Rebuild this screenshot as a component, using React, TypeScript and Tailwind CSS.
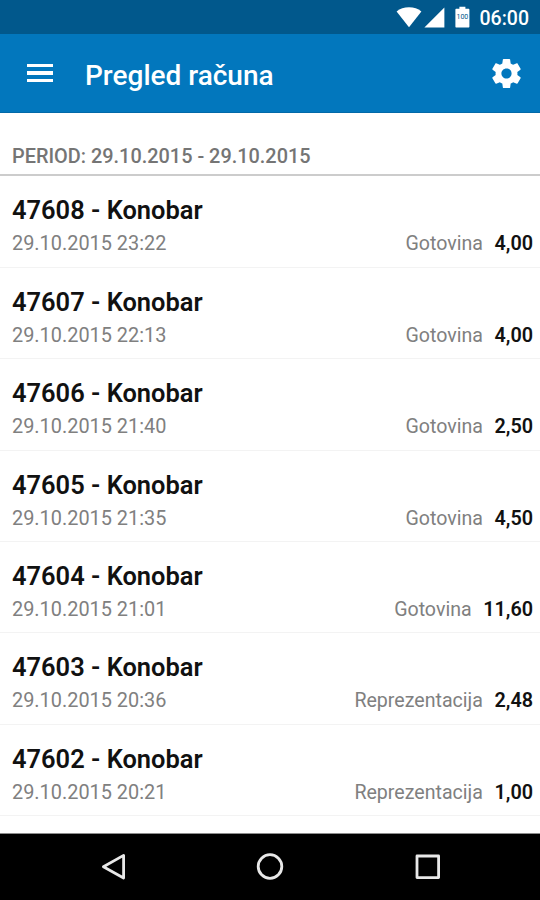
import React from 'react';

interface Receipt {
  id: number;
  waiter: string;
  time: string;
  payment: string;
  amount: string;
}

const receipts: Receipt[] = [
  { id: 47608, waiter: 'Konobar', time: '29.10.2015 23:22', payment: 'Gotovina', amount: '4,00' },
  { id: 47607, waiter: 'Konobar', time: '29.10.2015 22:13', payment: 'Gotovina', amount: '4,00' },
  { id: 47606, waiter: 'Konobar', time: '29.10.2015 21:40', payment: 'Gotovina', amount: '2,50' },
  { id: 47605, waiter: 'Konobar', time: '29.10.2015 21:35', payment: 'Gotovina', amount: '4,50' },
  { id: 47604, waiter: 'Konobar', time: '29.10.2015 21:01', payment: 'Gotovina', amount: '11,60' },
  { id: 47603, waiter: 'Konobar', time: '29.10.2015 20:36', payment: 'Reprezentacija', amount: '2,48' },
  { id: 47602, waiter: 'Konobar', time: '29.10.2015 20:21', payment: 'Reprezentacija', amount: '1,00' },
];

const StatusBar: React.FC = () => (
  <div className="flex h-[34px] shrink-0 items-center justify-end bg-[#01588c] pr-[11px] text-white">
    <svg className="mr-[2px] h-[22px] w-[26px]" viewBox="0 0 26 22" fill="currentColor">
      <path d="M13 21.2 0.6 5.4C4 2.8 8.2 1.3 13 1.3s9 1.5 12.4 4.1z" />
    </svg>
    <svg className="mr-[10px] h-[22px] w-[21px]" viewBox="0 0 21 22" fill="currentColor">
      <path d="M0.4 21.4 20.4 1.4v20z" />
    </svg>
    <svg className="mr-[10px] h-[22px] w-[15px]" viewBox="0 0 15 22" fill="currentColor">
      <path d="M1.4 2.8H4.4V0.8h6v2h3c.6 0 1 .4 1 1v16.6c0 .6-.4 1-1 1h-12c-.6 0-1-.4-1-1V3.8c0-.6.4-1 1-1z" />
      <text x="7.4" y="13" textAnchor="middle" fontSize="7" fill="#01588c">100</text>
    </svg>
    <span className="pt-[3px] text-[19.5px] leading-none font-medium">06:00</span>
  </div>
);

const Toolbar: React.FC = () => (
  <header className="flex h-[79px] shrink-0 items-center border-b border-[#0269a8] bg-[#0277bd] pr-[16px] pl-[27px] text-white">
    <button className="flex w-[26px] flex-col gap-[4px]" aria-label="Menu">
      <span className="h-[3.5px] w-full bg-white" />
      <span className="h-[3.5px] w-full bg-white" />
      <span className="h-[3.5px] w-full bg-white" />
    </button>
    <h1 className="ml-[32px] flex-1 pt-[5px] text-[28px] leading-none font-medium">Pregled računa</h1>
    <svg className="h-[35px] w-[35px]" viewBox="0 0 24 24" fill="currentColor">
      <path d="M19.43 12.98c.04-.32.07-.64.07-.98s-.03-.66-.07-.98l2.11-1.65c.19-.15.24-.42.12-.64l-2-3.46c-.12-.22-.39-.3-.61-.22l-2.49 1c-.52-.4-1.08-.73-1.69-.98l-.38-2.65C14.46 2.18 14.25 2 14 2h-4c-.25 0-.46.18-.49.42l-.38 2.65c-.61.25-1.17.59-1.69.98l-2.49-1c-.23-.09-.49 0-.61.22l-2 3.46c-.13.22-.07.49.12.64l2.11 1.65c-.04.32-.07.65-.07.98s.03.66.07.98l-2.11 1.65c-.19.15-.24.42-.12.64l2 3.46c.12.22.39.3.61.22l2.49-1c.52.4 1.08.73 1.69.98l.38 2.65c.03.24.24.42.49.42h4c.25 0 .46-.18.49-.42l.38-2.65c.61-.25 1.17-.59 1.69-.98l2.49 1c.23.09.49 0 .61-.22l2-3.46c.12-.22.07-.49-.12-.64l-2.11-1.65zM12 15.5c-1.93 0-3.5-1.57-3.5-3.5s1.57-3.5 3.5-3.5 3.5 1.57 3.5 3.5-1.57 3.5-3.5 3.5z" />
    </svg>
  </header>
);

const ReceiptRow: React.FC<{ receipt: Receipt }> = ({ receipt }) => (
  <li className="h-[91.4px] shrink-0 border-b border-[#f3f3f3] pt-[19px] pr-[7px] pl-[12px]">
    <h2 className="text-[25.45px] leading-[30px] font-semibold text-[#111111]">
      {receipt.id} - {receipt.waiter}
    </h2>
    <div className="mt-[6px] flex items-baseline leading-[25px]">
      <span className="flex-1 text-[19.9px] text-[#808080]">{receipt.time}</span>
      <span className="text-[19.6px] text-[#808080]">{receipt.payment}</span>
      <span className="ml-[11.5px] text-[19.8px] font-semibold text-[#111111]">{receipt.amount}</span>
    </div>
  </li>
);

const NavigationBar: React.FC = () => (
  <nav className="flex h-[66px] shrink-0 items-center justify-center gap-[129.5px] bg-black text-[#e8e8e8]">
    <svg className="h-[28px] w-[28px]" viewBox="0 0 28 28" fill="none" stroke="currentColor" strokeWidth="2.8" strokeLinejoin="round">
      <path d="M24.6 2.4v22.6L4.4 13.7z" />
    </svg>
    <svg className="h-[28px] w-[28px]" viewBox="0 0 28 28" fill="none" stroke="currentColor" strokeWidth="2.8">
      <circle cx="14" cy="13.5" r="11.8" />
    </svg>
    <svg className="h-[28px] w-[28px]" viewBox="0 0 28 28" fill="none" stroke="currentColor" strokeWidth="2.8" strokeLinejoin="round">
      <rect x="3" y="3" width="21.6" height="21.6" />
    </svg>
  </nav>
);

export default function App() {
  return (
    <div className="flex h-[900px] w-[540px] flex-col overflow-hidden bg-white font-['Roboto',sans-serif]">
      <StatusBar />
      <Toolbar />
      <div className="flex h-[63px] shrink-0 items-end border-b-2 border-[#cccccc] pb-[6px] pl-[12px] text-[19.9px] leading-[22px] font-medium text-[#757575]">
        PERIOD: 29.10.2015 - 29.10.2015
      </div>
      <ul className="flex min-h-0 flex-1 flex-col overflow-hidden border-b border-[#8c8c8c] pt-[0.4px]">
        {receipts.map((receipt) => (
          <ReceiptRow key={receipt.id} receipt={receipt} />
        ))}
      </ul>
      <NavigationBar />
    </div>
  );
}
